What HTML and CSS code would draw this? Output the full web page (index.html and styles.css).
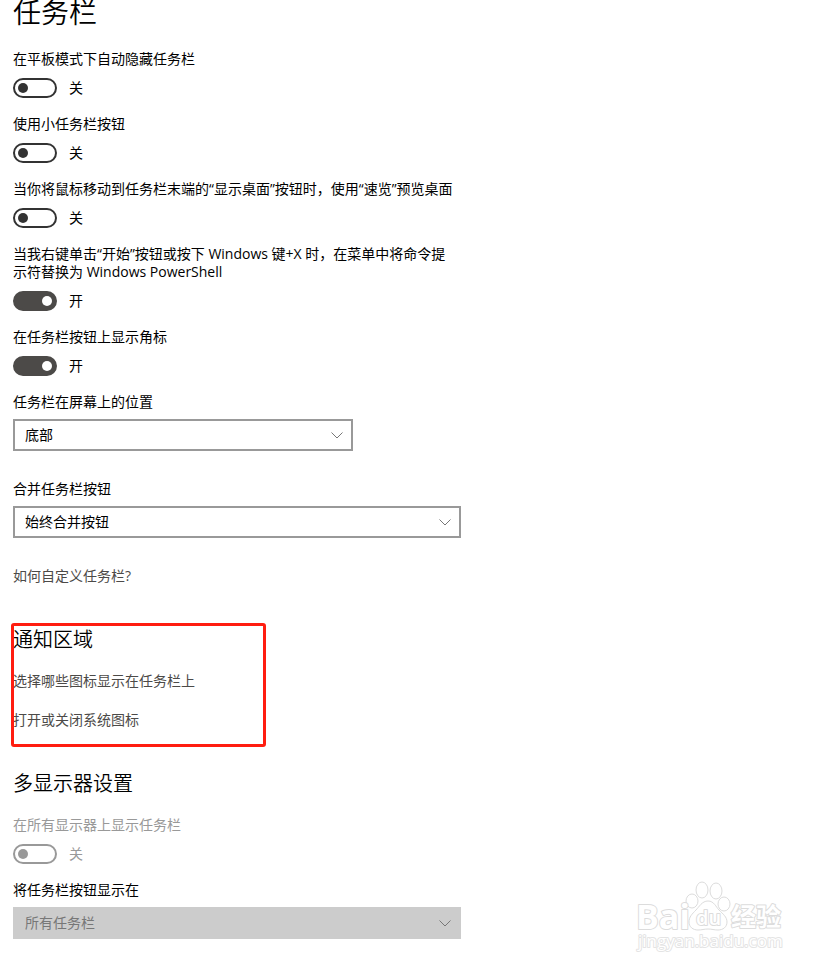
FILE: index.html
```html
<!DOCTYPE html>
<html lang="zh-CN">
<head>
  <meta charset="UTF-8" />
  <meta name="viewport" content="width=device-width, initial-scale=1.0"/>
  <title>任务栏</title>
  <link rel="stylesheet" href="styles.css">
</head>
<body>

<main class="settings">
  <h1>任务栏</h1>

  <div class="setting">
    <label for="tablet-hide">在平板模式下自动隐藏任务栏</label>
    <div class="toggle-row">
      <input type="checkbox" class="toggle" id="tablet-hide">
      <span class="state">关</span>
    </div>
  </div>

  <div class="setting">
    <label for="small-buttons">使用小任务栏按钮</label>
    <div class="toggle-row">
      <input type="checkbox" class="toggle" id="small-buttons">
      <span class="state">关</span>
    </div>
  </div>

  <div class="setting">
    <label for="peek">当你将鼠标移动到任务栏末端的“显示桌面”按钮时，使用“速览”预览桌面</label>
    <div class="toggle-row">
      <input type="checkbox" class="toggle" id="peek">
      <span class="state">关</span>
    </div>
  </div>

  <div class="setting">
    <label for="powershell">当我右键单击“开始”按钮或按下 Windows 键+X 时，在菜单中将命令提示符替换为 Windows PowerShell</label>
    <div class="toggle-row">
      <input type="checkbox" class="toggle" id="powershell" checked>
      <span class="state">开</span>
    </div>
  </div>

  <div class="setting">
    <label for="badges">在任务栏按钮上显示角标</label>
    <div class="toggle-row">
      <input type="checkbox" class="toggle" id="badges" checked>
      <span class="state">开</span>
    </div>
  </div>

  <div class="setting select-setting">
    <label for="position">任务栏在屏幕上的位置</label>
    <div class="select-box short">
      <select id="position">
        <option>底部</option>
        <option>靠左</option>
        <option>顶部</option>
        <option>靠右</option>
      </select>
      <svg class="chevron" viewBox="0 0 12 7"><path d="M0.5 0.5 L6 6 L11.5 0.5"/></svg>
    </div>
  </div>

  <div class="setting select-setting">
    <label for="combine">合并任务栏按钮</label>
    <div class="select-box">
      <select id="combine">
        <option>始终合并按钮</option>
        <option>任务栏已满时</option>
        <option>从不</option>
      </select>
      <svg class="chevron" viewBox="0 0 12 7"><path d="M0.5 0.5 L6 6 L11.5 0.5"/></svg>
    </div>
  </div>

  <a href="#" class="link">如何自定义任务栏?</a>

  <section class="group marked">
    <h2>通知区域</h2>
    <a href="#" class="link">选择哪些图标显示在任务栏上</a>
    <a href="#" class="link">打开或关闭系统图标</a>
  </section>

  <section class="group">
    <h2>多显示器设置</h2>
    <div class="setting disabled">
      <label for="all-displays">在所有显示器上显示任务栏</label>
      <div class="toggle-row">
        <input type="checkbox" class="toggle" id="all-displays" disabled>
        <span class="state">关</span>
      </div>
    </div>
    <div class="setting select-setting">
      <label for="show-on">将任务栏按钮显示在</label>
      <div class="select-box">
        <select id="show-on" disabled>
          <option>所有任务栏</option>
        </select>
        <svg class="chevron" viewBox="0 0 12 7"><path d="M0.5 0.5 L6 6 L11.5 0.5"/></svg>
      </div>
    </div>
  </section>
</main>

<svg class="watermark" viewBox="0 0 152 74">
  <g class="paw">
    <ellipse cx="58" cy="20" rx="6" ry="7"/>
    <ellipse cx="68" cy="9" rx="6" ry="8"/>
    <ellipse cx="82" cy="10" rx="6" ry="8"/>
    <ellipse cx="90" cy="23" rx="6" ry="7"/>
    <path d="M74 20 C68 20 65 26 62 29 C58 33 55 36 55 41 C55 46 59 49 64 49 C68 49 70 48 74 48 C78 48 80 49 84 49 C89 49 93 46 93 41 C93 36 89 33 85 29 C82 26 80 20 74 20 Z"/>
  </g>
  <text class="brand" x="2" y="48">Bai</text>
  <text class="du" x="62" y="44">du</text>
  <text class="brand-cn" x="97" y="45">经验</text>
  <text class="site" x="4" y="66">jingyan.baidu.com</text>
</svg>

<script>
  document.querySelectorAll(".toggle").forEach((toggle) => {
    toggle.addEventListener("change", () => {
      toggle.nextElementSibling.textContent = toggle.checked ? "开" : "关";
    });
  });
</script>

</body>
</html>
```

FILE: styles.css
```css
* {
  box-sizing: border-box;
}

body {
  position: relative;
  min-height: 100vh;
  margin: 0;
  font-family: "Open Sans", "Noto Sans CJK SC", sans-serif;
  font-size: 14px;
  line-height: 18px;
  color: #000;
  background: #fff;
}

.settings {
  max-width: 474px;
  padding: 0 13px 31px;
}

h1 {
  margin: 0 0 26px;
  font-size: 28px;
  font-weight: 350;
  line-height: 24px;
}

h2 {
  margin: 0 0 18px;
  font-size: 20px;
  font-weight: 350;
  line-height: 28px;
}

.setting {
  margin-bottom: 17px;
}

.setting label {
  display: block;
  max-width: 444px;
  margin-bottom: 10px;
}

.toggle-row {
  display: flex;
  align-items: center;
  gap: 12px;
  height: 20px;
}

.toggle {
  appearance: none;
  display: flex;
  align-items: center;
  width: 44px;
  height: 20px;
  margin: 0;
  padding: 0 3px;
  border: 2px solid #333;
  border-radius: 10px;
}

.toggle::before {
  content: "";
  width: 10px;
  height: 10px;
  border-radius: 50%;
  background: #333;
}

.toggle:checked {
  justify-content: flex-end;
  border-color: #4c4a48;
  background: #4c4a48;
}

.toggle:checked::before {
  background: #fff;
}

.toggle:disabled {
  border-color: #999;
}

.toggle:disabled::before {
  background: #999;
}

.disabled {
  color: #999;
}

.select-setting {
  margin-bottom: 29px;
}

.select-setting label {
  margin-bottom: 8px;
}

.select-box {
  position: relative;
}

.select-box.short {
  max-width: 340px;
}

select {
  appearance: none;
  display: block;
  width: 100%;
  height: 32px;
  padding: 0 32px 0 10px;
  border: 2px solid #999;
  border-radius: 0;
  background: #fff;
  font: inherit;
  color: #000;
}

select:disabled {
  border-color: #ccc;
  background: #ccc;
  color: #777;
  opacity: 1;
}

.chevron {
  position: absolute;
  top: 13px;
  right: 10px;
  width: 12px;
  height: 7px;
  fill: none;
  stroke: #777;
  pointer-events: none;
}

.link {
  display: block;
  color: #4c4a48;
  text-decoration: none;
}

.link:hover {
  color: #999;
}

.group {
  margin-top: 41px;
}

.group .link + .link {
  margin-top: 21px;
}

.group .setting:last-child {
  margin-bottom: 0;
}

/* red frame around the notification area */
.marked {
  position: relative;
}

.marked::before {
  content: "";
  position: absolute;
  top: -3px;
  bottom: -18px;
  left: -2px;
  width: 249px;
  border: 3px solid #ff1d10;
  border-radius: 3px;
  pointer-events: none;
}

.watermark {
  position: absolute;
  right: 43px;
  bottom: 16px;
  width: 152px;
  height: 74px;
  fill: #fff;
  stroke: #dcdcdc;
  pointer-events: none;
}

.watermark text {
  paint-order: stroke;
  stroke-width: 2px;
  stroke-linejoin: round;
}

.brand {
  font-size: 34px;
  font-weight: 700;
}

.du {
  font-size: 20px;
  font-weight: 600;
}

.brand-cn {
  font-size: 25px;
  font-weight: 700;
}

.watermark .site {
  font-size: 17px;
  stroke: #e4e4e4;
}
```
